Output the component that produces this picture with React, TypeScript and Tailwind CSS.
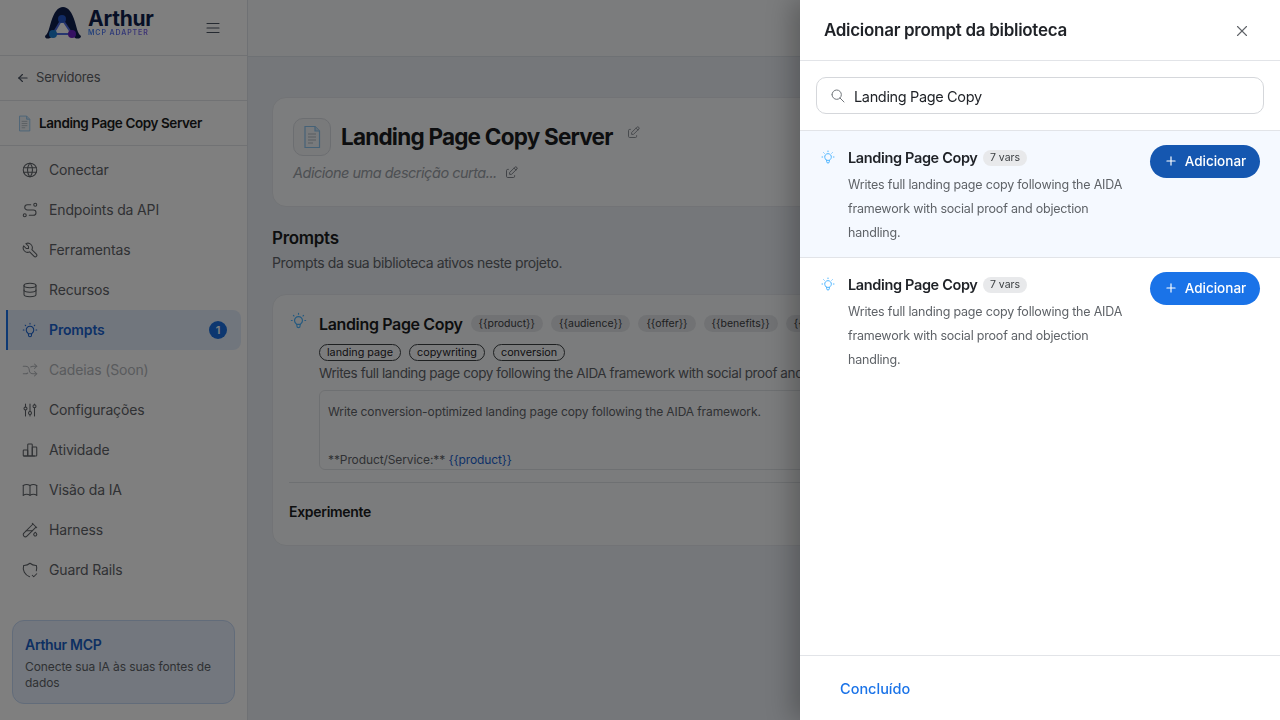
import {
  TbAdjustments,
  TbArrowLeft,
  TbArrowsShuffle,
  TbBook,
  TbBulb,
  TbChartBar,
  TbDatabase,
  TbEdit,
  TbMenu2,
  TbPlus,
  TbRoute,
  TbSearch,
  TbShieldCheck,
  TbTestPipe,
  TbTool,
  TbWorld,
  TbX,
} from "react-icons/tb";

const font = { fontFamily: "Inter, 'Noto Sans', sans-serif" };

function DocIcon({ size }: { size: number }) {
  return (
    <svg width={size} height={size} viewBox="0 0 24 24" fill="none">
      <path d="M5 1.5h10l4.5 4.5v16.5H5z" fill="#f1f5f9" stroke="#8cc4ee" strokeWidth="1.2" />
      <path d="M15 1.5V6h4.5" fill="#cfe3f5" stroke="#8cc4ee" strokeWidth="1.2" />
      <path d="M8 9h8M8 12h8M8 15h8M8 18h5" stroke="#b0b8c0" strokeWidth="1.2" />
    </svg>
  );
}

function Logo() {
  return (
    <div className="flex items-center gap-[6px] -mt-[8px]">
      <svg width="38" height="33" viewBox="0 0 38 33" fill="none">
        <path
          d="M1 29C4 27 5 22 7 15C10 5 14 0 19 0C24 0 28 5 31 15C33 22 34 27 37 29C37 32 33 32 31 31C30 30 29 28 28 27L18 12L9 27C8 29 7 31 6 31C4 32 1 32 1 29Z"
          fill="#0f1f4d"
        />
        <path d="M18 12L9 27H28Z" stroke="#4f6de0" strokeWidth="2" />
        <circle cx="18" cy="12" r="4" fill="#2456c9" />
        <circle cx="9" cy="27" r="4" fill="#1c7fd0" />
        <circle cx="28" cy="27" r="4" fill="#6a22c4" />
      </svg>
      <div className="flex flex-col -mt-[1px]">
        <span className="text-[21px] leading-[20px] font-bold text-[#0f1f4d] tracking-[-0.25px]">Arthur</span>
        <span className="text-[7px] leading-[8px] font-semibold tracking-[0.9px] bg-gradient-to-r from-[#3b82f6] to-[#7c5ae8] bg-clip-text text-transparent">
          MCP ADAPTER
        </span>
      </div>
    </div>
  );
}

const navItems = [
  { label: "Conectar", icon: TbWorld },
  { label: "Endpoints da API", icon: TbRoute },
  { label: "Ferramentas", icon: TbTool },
  { label: "Recursos", icon: TbDatabase },
  { label: "Prompts", icon: TbBulb, active: true, badge: 1 },
  { label: "Cadeias (Soon)", icon: TbArrowsShuffle, disabled: true },
  { label: "Configurações", icon: TbAdjustments },
  { label: "Atividade", icon: TbChartBar },
  { label: "Visão da IA", icon: TbBook },
  { label: "Harness", icon: TbTestPipe },
  { label: "Guard Rails", icon: TbShieldCheck },
];

function Sidebar() {
  return (
    <aside className="w-[248px] h-full shrink-0 bg-white border-r border-[#dfe3e8] flex flex-col">
      <div className="h-[56px] shrink-0 border-b border-[#e2e4e8] flex items-center pl-[44px] pr-[25px] justify-between">
        <Logo />
        <TbMenu2 size={18} strokeWidth={1.5} className="text-[#4b5563]" />
      </div>
      <div className="h-[45px] shrink-0 border-b border-[#e2e4e8] flex items-center gap-[6px] pl-[16px] text-[13px] tracking-[-0.2px] text-[#5f6368]">
        <TbArrowLeft size={14} className="text-[#4b5563]" />
        Servidores
      </div>
      <div className="h-[45px] shrink-0 border-b border-[#e2e4e8] flex items-center gap-[6px] pl-[16px] text-[13.5px] font-semibold tracking-[-0.42px] text-[#1a1c20]">
        <DocIcon size={17} />
        Landing Page Copy Server
      </div>
      <nav className="flex flex-col mt-[4px] pl-[6px] pr-[6px]">
        {navItems.map((item) => {
          const Icon = item.icon;
          return (
            <div
              key={item.label}
              className={
                item.active
                  ? "h-[40px] flex items-center gap-[10px] pl-[13px] pr-[14px] rounded-r-[8px] border-l-2 border-[#1a73e8] bg-[#e3edfb] text-[#1a63d0] font-semibold text-[14px]"
                  : item.disabled
                    ? "h-[40px] flex items-center gap-[10px] pl-[15px] pr-[14px] text-[#b3b6bb] text-[14px]"
                    : "h-[40px] flex items-center gap-[10px] pl-[15px] pr-[14px] text-[#5f6368] text-[14px]"
              }
            >
              <Icon size={18} strokeWidth={1.4} className="shrink-0" />
              <span className="flex-1 pb-[2px] tracking-[-0.15px]">{item.label}</span>
              {item.badge ? (
                <span className="w-[18px] h-[18px] rounded-full bg-[#1a6fe0] text-white text-[11px] font-semibold flex items-center justify-center">
                  {item.badge}
                </span>
              ) : null}
            </div>
          );
        })}
      </nav>
      <div className="mt-auto mx-[12px] mb-[16px] h-[84px] rounded-[12px] border border-[#c5d8f5] bg-[#e6effc] pl-[12px] pr-[8px] pt-[14px]">
        <div className="text-[14px] leading-[20px] font-semibold tracking-[-0.3px] text-[#1a5fc4]">Arthur MCP</div>
        <div className="text-[12px] leading-[16px] mt-[4px] text-[#5f6368] tracking-[-0.1px]">
          Conecte sua IA às suas fontes de dados
        </div>
      </div>
    </aside>
  );
}

const varTags = ["{{product}}", "{{audience}}", "{{offer}}", "{{benefits}}", "{{s"];

function MainArea() {
  return (
    <main className="flex-1 min-w-0 h-full bg-[#eaeff5] flex flex-col">
      <div className="h-[57px] shrink-0 bg-white/60 border-b border-[#dde2e8]" />
      <div className="px-[24px] pt-[40px]">
        <section className="h-[110px] rounded-[14px] bg-white/70 border border-[#e4e7ec] pl-[20px] pt-[20px]">
          <div className="flex items-center gap-[10px]">
            <div className="w-[38px] h-[38px] rounded-[10px] border border-[#d9dde3] bg-[#f3f4f6] flex items-center justify-center">
              <DocIcon size={24} />
            </div>
            <h1 className="text-[22.5px] leading-[32px] font-bold tracking-[-0.78px] text-[#1a1c20]">Landing Page Copy Server</h1>
            <TbEdit size={15} strokeWidth={1.5} className="text-[#8a8f96] -mt-[9px] ml-[3px]" />
          </div>
          <div className="flex items-center gap-[7px] mt-[6px] text-[14.5px] italic tracking-[-0.5px] text-[#9aa0a6]">
            Adicione uma descrição curta...
            <TbEdit size={15} strokeWidth={1.5} className="text-[#7a7f86]" />
          </div>
        </section>

        <h2 className="mt-[20px] text-[17px] leading-[22px] font-semibold tracking-[-0.3px] text-[#1a1c20]">Prompts</h2>
        <p className="mt-[4px] text-[14px] leading-[20px] tracking-[-0.4px] text-[#5f6368]">
          Prompts da sua biblioteca ativos neste projeto.
        </p>

        <section className="mt-[21px] h-[252px] rounded-[14px] bg-white/60 border border-[#e4e7ec] px-[16px] pt-[16px] overflow-hidden">
          <div className="flex gap-[12px]">
            <TbBulb size={19} strokeWidth={1.5} className="text-[#4db5ff] shrink-0" />
            <div className="min-w-0 flex-1 -ml-[1px]">
              <div className="flex items-center gap-[8px] h-[25px] whitespace-nowrap">
                <span className="shrink-0 text-[16px] font-semibold tracking-[-0.35px] text-[#1a1c20]">Landing Page Copy</span>
                {varTags.map((t) => (
                  <span key={t} className="shrink-0 h-[17px] px-[8px] rounded-full bg-[#e3e5e8] text-[10.5px] leading-[17px] text-[#3c4043]">
                    {t}
                  </span>
                ))}
              </div>
              <div className="flex gap-[8px] mt-[8px]">
                {["landing page", "copywriting", "conversion"].map((t) => (
                  <span key={t} className="h-[17px] px-[7px] rounded-full border border-[#3c4043] text-[10.8px] leading-[15px] text-[#1f2227]">
                    {t}
                  </span>
                ))}
              </div>
              <p className="mt-[2px] text-[13.5px] leading-[20px] tracking-[-0.4px] text-[#5f6368] whitespace-nowrap">
                Writes full landing page copy following the AIDA framework with social proof and
              </p>
              <div className="mt-[7px] h-[80px] rounded-[6px] border border-[#dde0e4] px-[8px] pt-[9px] text-[12px] leading-[24px] tracking-[-0.1px] text-[#5f6368] overflow-hidden">
                <div>Write conversion-optimized landing page copy following the AIDA framework.</div>
                <div className="h-[24px]" />
                <div>
                  **Product/Service:** <span className="text-[#1a63d0]">{"{{product}}"}</span>
                </div>
              </div>
            </div>
          </div>
          <div className="mt-[12px] border-t border-[#dde0e4] pt-[19px] text-[14px] leading-[20px] font-semibold tracking-[-0.3px] text-[#1a1c20]">
            Experimente
          </div>
        </section>
      </div>
    </main>
  );
}

function LibraryRow({ hovered }: { hovered?: boolean }) {
  return (
    <div className={hovered ? "flex gap-[12px] h-[127px] pl-[20px] pr-[20px] pt-[14px] bg-[#f5f9ff] border-b border-[#e2e4e8]" : "flex gap-[12px] h-[127px] pl-[20px] pr-[20px] pt-[14px] bg-white"}>
      <TbBulb size={16} strokeWidth={1.5} className="text-[#4db5ff] shrink-0 mt-[4px]" />
      <div className="w-[282px] shrink-0">
        <div className="flex items-center gap-[5px] h-[24px] mt-[1px]">
          <span className="text-[14.5px] font-semibold tracking-[-0.35px] text-[#1f2227]">Landing Page Copy</span>
          <span className="h-[16px] px-[7.5px] rounded-full bg-[#e8e9eb] text-[10.5px] leading-[16px] tracking-[-0.05px] text-[#3c4043]">7 vars</span>
        </div>
        <p className="mt-[3px] text-[12.5px] leading-[24px] tracking-[-0.2px] text-[#5f6368]">
          Writes full landing page copy following the AIDA framework with social proof and objection handling.
        </p>
      </div>
      <button className={hovered ? "ml-auto h-[33px] w-[110px] pb-[1px] rounded-full bg-[#1557b0] text-white text-[13.5px] font-medium flex items-center justify-center gap-[7px]" : "ml-auto h-[33px] w-[110px] pb-[1px] rounded-full bg-[#1a73e8] text-white text-[13.5px] font-medium flex items-center justify-center gap-[7px]"}>
        <TbPlus size={14} />
        Adicionar
      </button>
    </div>
  );
}

function Drawer() {
  return (
    <div className="absolute inset-y-0 right-0 w-[480px] bg-white flex flex-col shadow-[-8px_0_24px_rgba(0,0,0,0.25)]">
      <div className="h-[61px] shrink-0 border-b border-[#e2e4e8] flex items-center justify-between pl-[24px] pr-[29px] pt-[2px]">
        <h2 className="text-[17px] font-semibold tracking-[-0.3px] text-[#1f2227]">Adicionar prompt da biblioteca</h2>
        <TbX size={18} strokeWidth={1.5} className="text-[#5f6368]" />
      </div>
      <div className="h-[70px] shrink-0 px-[16px] pt-[16px] border-b border-[#e2e4e8]">
        <div className="h-[37px] rounded-[10px] border border-[#d5d7db] flex items-center gap-[8px] pl-[13px]">
          <TbSearch size={16} strokeWidth={1.5} className="text-[#70757a]" />
          <span className="mt-[2px] text-[14.5px] tracking-[-0.35px] text-[#1f2227]">Landing Page Copy</span>
        </div>
      </div>
      <div className="flex-1 min-h-0">
        <LibraryRow hovered />
        <LibraryRow />
      </div>
      <div className="h-[65px] shrink-0 border-t border-[#e2e4e8] flex items-center pl-[40px] pt-[2px] text-[14.5px] font-medium text-[#1a73e8]">
        Concluído
      </div>
    </div>
  );
}

export default function App() {
  return (
    <div className="relative w-[1280px] h-[720px] overflow-hidden" style={font}>
      <div className="flex h-full">
        <Sidebar />
        <MainArea />
      </div>
      <div className="absolute inset-0 bg-black/50 backdrop-blur-[0.5px]" />
      <Drawer />
    </div>
  );
}
